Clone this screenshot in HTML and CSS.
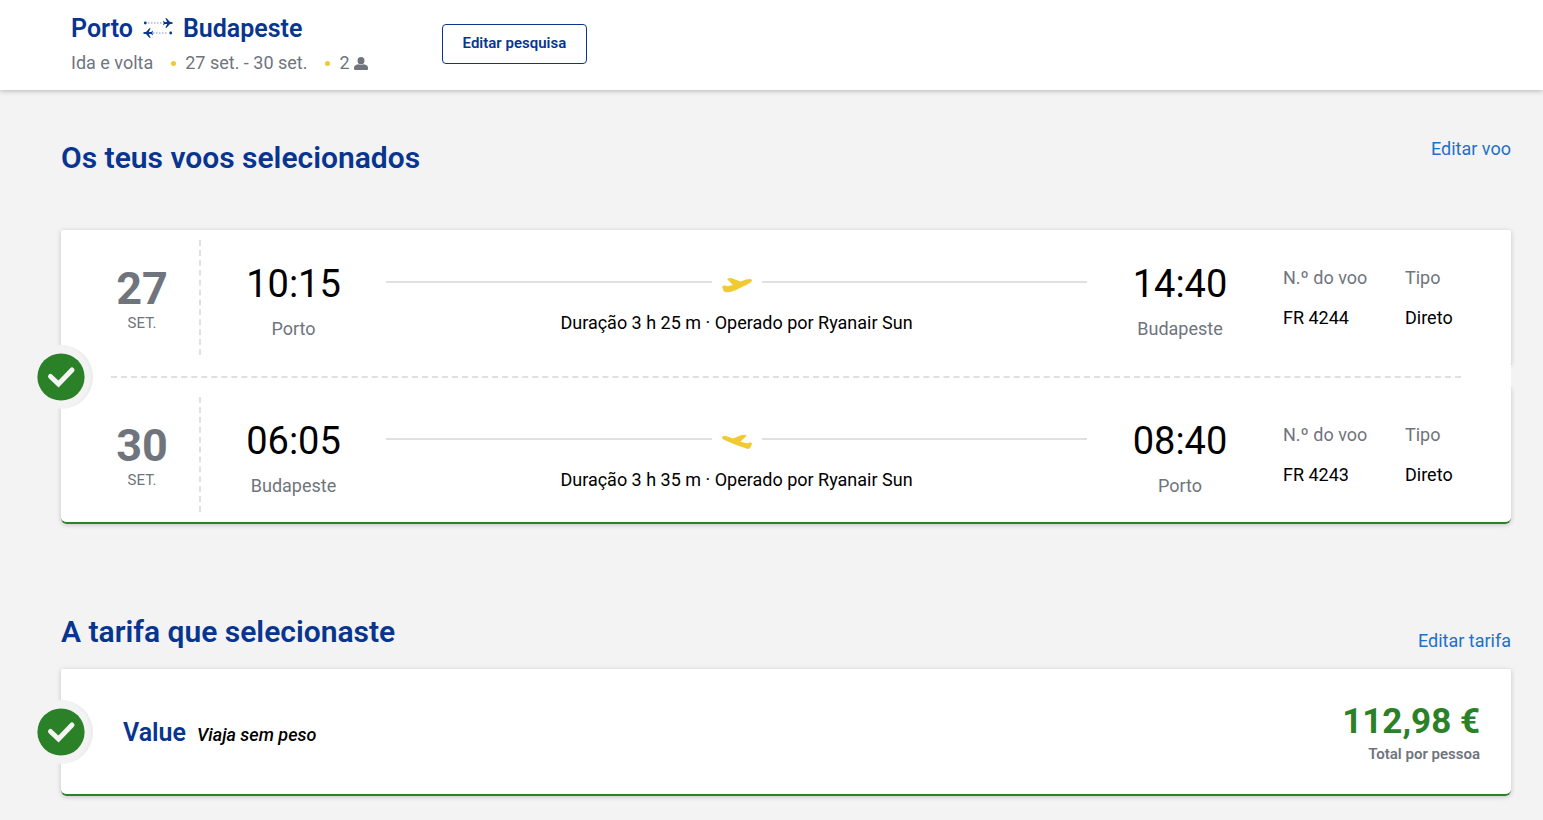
FILE: index.html
```html
<!DOCTYPE html>
<html lang="pt">
<head>
<meta charset="utf-8">
<meta name="viewport" content="width=device-width, initial-scale=1">
<title>Porto – Budapeste</title>
<link rel="stylesheet" href="styles.css">
</head>
<body>
<header class="topbar">
  <div class="trip">
    <h1 class="trip-title">
      <span>Porto</span>
      <svg class="trip-icon" viewBox="0 1 30 20" aria-hidden="true">
        <g fill="#073590">
          <circle cx="2.3" cy="5" r="1.4"/>
          <path d="M20 2.600l1.800 1.500h2.400L22.300.2h1.300l3.400 3.800h1.400q1.600.3 1.600 1t-1.600 1H27l-3.400 3.800h-1.300l1.900-3.900h-2.400L20 7.400l.6-2.400z"/>
          <circle cx="27.700" cy="15" r="1.400"/>
          <path d="M10 12.600l-1.800 1.500H5.800L7.700 10.200H6.400L3 14H1.600Q0 14.300 0 15t1.600 1H3l3.400 3.800h1.300l-1.900-3.900h2.400L10 17.400l-.6-2.400z"/>
        </g>
        <path d="M5 5h15M10 15h15" fill="none" stroke="#a9b9d8" stroke-width="1.500" stroke-dasharray="1.500 1.500"/>
      </svg>
      <span>Budapeste</span>
    </h1>
    <ul class="trip-meta">
      <li>Ida e volta</li>
      <li>27 set. - 30 set.</li>
      <li>2<svg class="person" viewBox="0 0 14 13" aria-label="passageiros"><g fill="#6f747d"><ellipse cx="7" cy="3.700" rx="3.500" ry="3.700"/><path d="M0 12V10.500Q0 8.400 4.400 7.300q2.600 1.600 5.200 0Q14 8.400 14 10.500V12q0 1-1 1H1q-1 0-1-1z"/></g></svg></li>
    </ul>
  </div>
  <button class="edit-search" type="button">Editar pesquisa</button>
</header>

<main class="content">
  <section>
    <div class="section-head flights-head">
      <h2>Os teus voos selecionados</h2>
      <a href="#voo">Editar voo</a>
    </div>
    <div class="flights">
      <article class="leg">
        <div class="date"><strong>27</strong><span>SET.</span></div>
        <div class="stop"><time>10:15</time><span>Porto</span></div>
        <div class="route">
          <div class="track"><svg class="plane" viewBox="0 -7 30 22" aria-hidden="true"><path fill="#f1c933" d="M0 8.500L2.500 7.300Q4 8 5.500 8.300L11 7 5 .9Q7.500-.3 10 .2L18.500 3.600 24 1.600Q29 .4 30 2 30.300 4.200 26 6L14 12Q7 15 3 14 1 13.600 1.200 11.500z"/></svg></div>
          <p>Duração 3 h 25 m · Operado por Ryanair Sun</p>
        </div>
        <div class="stop"><time>14:40</time><span>Budapeste</span></div>
        <dl class="info">
          <div><dt>N.º do voo</dt><dd>FR 4244</dd></div>
          <div><dt>Tipo</dt><dd>Direto</dd></div>
        </dl>
      </article>
      <div class="divider"><hr></div>
      <article class="leg last">
        <div class="date"><strong>30</strong><span>SET.</span></div>
        <div class="stop"><time>06:05</time><span>Budapeste</span></div>
        <div class="route">
          <div class="track"><svg class="plane" viewBox="0 -7 30 22" aria-hidden="true"><path fill="#f1c933" d="M0 2.500Q.5.600 3 .8L11 3.600 19.500.1Q22.500-.7 24.800.5L18.500 6.800 25 8.300Q26.500 8.200 28 7.300L30 8.300 29 11.500Q28 14.300 25 13.800L13 9.500 2.500 5Q0 4 0 2.500z"/></svg></div>
          <p>Duração 3 h 35 m · Operado por Ryanair Sun</p>
        </div>
        <div class="stop"><time>08:40</time><span>Porto</span></div>
        <dl class="info">
          <div><dt>N.º do voo</dt><dd>FR 4243</dd></div>
          <div><dt>Tipo</dt><dd>Direto</dd></div>
        </dl>
      </article>
      <div class="badge"><svg viewBox="0 0 48 48" aria-label="Selecionado"><circle cx="24" cy="24" r="23.600" fill="#2b8128"/><path d="M13.500 23.500l8 7.500L35 17" fill="none" stroke="#f4f4f4" stroke-width="5" stroke-linecap="round"/></svg></div>
    </div>
  </section>

  <section>
    <div class="section-head fare-head">
      <h2>A tarifa que selecionaste</h2>
      <a href="#tarifa">Editar tarifa</a>
    </div>
    <div class="fare">
      <div class="fare-name"><h3>Value</h3><em>Viaja sem peso</em></div>
      <div class="price"><strong>112,98 €</strong><span>Total por pessoa</span></div>
      <div class="badge"><svg viewBox="0 0 48 48" aria-label="Selecionado"><circle cx="24" cy="24" r="23.600" fill="#2b8128"/><path d="M13.500 23.500l8 7.500L35 17" fill="none" stroke="#f4f4f4" stroke-width="5" stroke-linecap="round"/></svg></div>
    </div>
  </section>
</main>
</body>
</html>
```
FILE: styles.css
```css
* { box-sizing: border-box; }
body {
  margin: 0;
  background: #f3f3f3;
  color: #000;
  font: 400 18px/24px Roboto, "Liberation Sans", sans-serif;
}
h1, h2, h3, p, ul, dl, dd { margin: 0; padding: 0; }
h1, h2, h3 { color: #073590; font-weight: 600; }
strong { font-weight: 700; }
svg { display: block; }
a { color: #1d70cc; text-decoration: none; }

.topbar {
  display: flex;
  align-items: flex-start;
  gap: 74px;
  padding: 13px 71px 15px;
  background: #fff;
  box-shadow: 0 1px 5px rgba(0, 0, 0, 0.25);
}
.trip-title {
  display: flex;
  align-items: center;
  gap: 10px;
  font-size: 25px;
  line-height: 32px;
}
.trip-icon { width: 30px; height: 20px; overflow: visible; }
.trip-meta {
  display: flex;
  list-style: none;
  margin-top: 6px;
  color: #6f747d;
}
.trip-meta li { display: flex; align-items: center; }
.trip-meta li + li::before {
  content: "";
  width: 5px;
  height: 5px;
  margin: 0 9px 0 18px;
  border-radius: 50%;
  background: #f1c933;
}
.person { width: 14px; height: 13px; margin-left: 4px; }
.edit-search {
  height: 40px;
  margin-top: 11px;
  padding: 0 20px 2px;
  border: 1px solid #073590;
  border-radius: 4px;
  background: #fff;
  color: #073590;
  font: 600 15px/20px Roboto, "Liberation Sans", sans-serif;
}

.content { padding: 48px 32px 24px 61px; }
.section-head {
  display: flex;
  justify-content: space-between;
}
.section-head h2 { font-size: 30px; line-height: 40px; }
.flights-head { margin-bottom: 52px; }
.fare-head { margin: 88px 0 17px; align-items: flex-end; }
.section-head a { line-height: 22px; }

.flights, .fare { position: relative; }
.leg, .fare {
  background: #fff;
  border-radius: 2px;
  box-shadow: 0 1px 5px rgba(0, 0, 0, 0.2);
}
.leg {
  display: grid;
  grid-template-columns: 138px 187px 1fr 186px 238px;
  padding: 10px 0;
}
.last, .fare {
  border-bottom: 2px solid #2b8128;
  border-radius: 2px 2px 6px 6px;
}
.date {
  display: flex;
  flex-direction: column;
  align-items: center;
  padding: 25px 0 22px 24px;
  color: #6f747d;
}
.date strong { font-size: 45px; line-height: 48px; }
.date span { font-size: 15px; line-height: 20px; }
.stop {
  display: flex;
  flex-direction: column;
  align-items: center;
  gap: 9px;
  padding-top: 20px;
}
.date + .stop { border-left: 2px dashed #e0e0e0; }
.stop time { font-size: 38px; line-height: 48px; }
.stop span { color: #6f747d; }
.route { padding-top: 31px; text-align: center; }
.track {
  display: flex;
  align-items: center;
  gap: 10px;
  margin-bottom: 18px;
}
.track::before, .track::after {
  content: "";
  flex: 1;
  height: 2px;
  background: #e0e0e0;
}
.plane { width: 30px; height: 22px; }
.info {
  display: grid;
  grid-template-columns: 122px 1fr;
  padding: 26px 0 0 10px;
}
.info dt { margin-bottom: 16px; color: #6f747d; }
.divider {
  position: relative;
  padding: 11px 50px 9px;
  background: #fff;
}
.divider hr {
  margin: 0;
  border: 0;
  border-top: 2px dashed #e0e0e0;
}
.badge {
  position: absolute;
  left: -32px;
  top: 50%;
  width: 64px;
  height: 64px;
  margin-top: -32px;
  padding: 8px;
  border-radius: 50%;
  background: #f3f3f3;
  box-shadow: inset -3px 0 3px -1px rgba(0, 0, 0, 0.04);
}
.badge svg { width: 48px; height: 48px; }

.fare {
  display: flex;
  justify-content: space-between;
  align-items: center;
  padding: 31px 31px 30px 62px;
}
.fare-name { display: flex; align-items: baseline; gap: 11px; padding-top: 1px; }
.fare-name h3 { font-size: 25px; line-height: 32px; }
.fare-name em { font-weight: 500; }
.price {
  display: flex;
  flex-direction: column;
  align-items: flex-end;
}
.price strong { color: #2b8128; font-size: 35px; line-height: 44px; }
.price span { color: #6f747d; font-size: 15px; line-height: 20px; font-weight: 600; }
```
